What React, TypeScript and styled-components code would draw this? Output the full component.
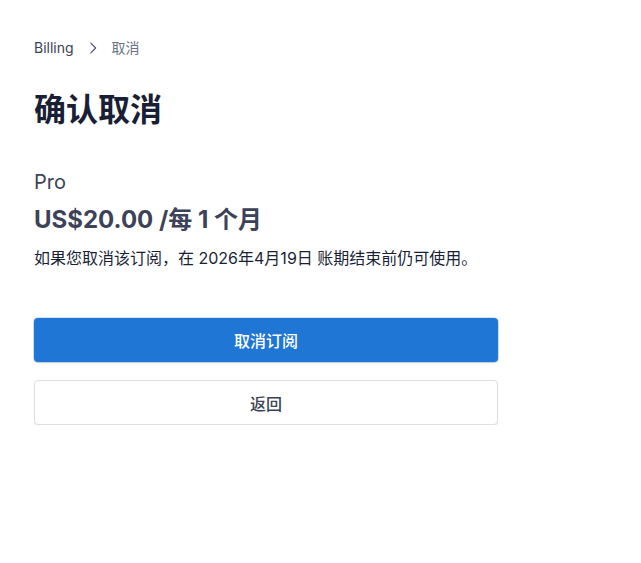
import React from "react";
import styled, { createGlobalStyle } from "styled-components";

const Global = createGlobalStyle`
  html, body { margin: 0; padding: 0; background: #fff; }
  body { font-family: Inter, "Noto Sans CJK SC", sans-serif; -webkit-font-smoothing: antialiased; }
`;

const Page = styled.div`
  padding: 38px 0 0 34px;
  width: 464px;
  display: flex;
  flex-direction: column;
`;

const Breadcrumb = styled.nav`
  display: flex;
  align-items: center;
  gap: 10px;
  font-size: 14px;
  line-height: 20px;
  height: 20px;
`;

const Crumb = styled.span<{ $current?: boolean }>`
  color: ${(p) => (p.$current ? "#697386" : "#3c4257")};
`;

const Title = styled.h1`
  margin: 32px 0 0;
  font-size: 32px;
  line-height: 40px;
  font-weight: 700;
  color: #1a1f36;
`;

const PlanName = styled.div`
  margin-top: 38px;
  font-size: 20px;
  line-height: 28px;
  color: #3c4257;
`;

const Price = styled.div`
  margin-top: 8px;
  font-size: 24px;
  line-height: 32px;
  font-weight: 700;
  color: #3c4257;
`;

const Note = styled.p`
  margin: 10px 0 0;
  font-size: 16px;
  line-height: 24px;
  color: #1a1f36;
`;

const Actions = styled.div`
  margin-top: 48px;
  display: flex;
  flex-direction: column;
  gap: 18px;
`;

const Button = styled.button<{ $primary?: boolean }>`
  height: ${(p) => (p.$primary ? "44px" : "45px")};
  width: 100%;
  border-radius: 4px;
  font-family: inherit;
  font-size: 16px;
  font-weight: 500;
  cursor: pointer;
  border: ${(p) => (p.$primary ? "none" : "1px solid #dcdde3")};
  background: ${(p) => (p.$primary ? "#1f76d4" : "#fff")};
  color: ${(p) => (p.$primary ? "#fff" : "#3c4257")};
  box-shadow: ${(p) =>
    p.$primary
      ? "0 1px 2px rgba(0,0,0,0.12), 0 0 0 1px rgba(31,118,212,0.2)"
      : "0 1px 1px rgba(0,0,0,0.08)"};
`;

const Chevron = () => (
  <svg width="14" height="14" viewBox="0 0 16 16" fill="none" style={{ margin: "0 2px" }}>
    <path d="M5.5 2.5l5.5 5.5-5.5 5.5" stroke="#4f566b" strokeWidth="1.4" strokeLinecap="round" strokeLinejoin="round" />
  </svg>
);

export default function App() {
  return (
    <>
      <Global />
      <Page>
        <Breadcrumb>
          <Crumb>Billing</Crumb>
          <Chevron />
          <Crumb $current>取消</Crumb>
        </Breadcrumb>
        <Title>确认取消</Title>
        <PlanName>Pro</PlanName>
        <Price>US$20.00 /每 1 个月</Price>
        <Note>如果您取消该订阅，在 2026年4月19日 账期结束前仍可使用。</Note>
        <Actions>
          <Button $primary>取消订阅</Button>
          <Button>返回</Button>
        </Actions>
      </Page>
    </>
  );
}
